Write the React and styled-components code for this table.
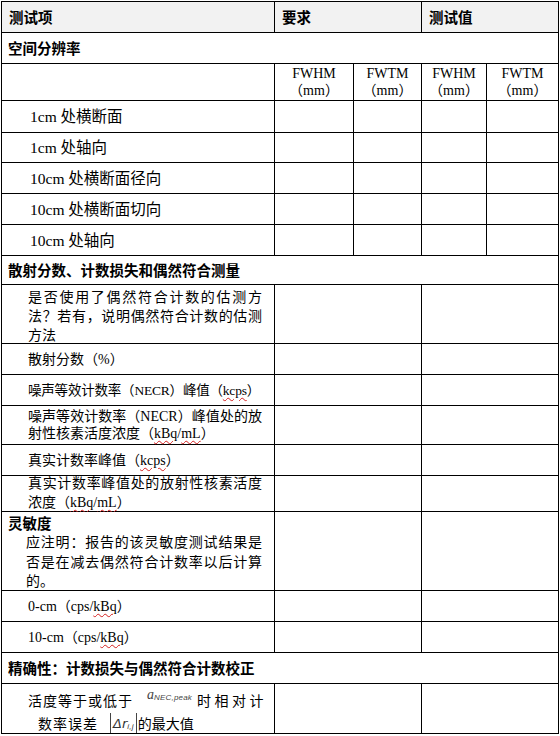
import React from 'react';
import styled, { createGlobalStyle } from 'styled-components';

const ROWS = [31, 31, 37, 32, 30, 31, 31, 31, 29, 59, 31, 31, 39, 31, 36, 79, 31, 31, 31, 50];

const Global = createGlobalStyle`
  html, body { margin: 0; padding: 0; background: #fff; }
  body {
    font-family: "Liberation Serif", "Noto Sans CJK SC", serif;
    color: #000;
  }
`;

const Sheet = styled.div`
  display: grid;
  grid-template-columns: 273px 79px 68px 65px 72px;
  grid-template-rows: ${ROWS.map((r) => `${r}px`).join(' ')};
  width: max-content;
  margin: 1px 0 0 1px;
  border-top: 1px solid #000;
  border-left: 1px solid #000;
`;

const Cell = styled.div`
  box-sizing: border-box;
  min-width: 0;
  border-right: 1px solid #000;
  border-bottom: 1px solid #000;
  grid-column: span ${(p) => p.$span || 1};
  background: #fff;
  display: flex;
  align-items: ${(p) => (p.$top ? 'flex-start' : 'center')};
  padding-top: ${(p) => p.$padTop || 0}px;
`;

const HeadCell = styled(Cell)`
  background: #f2f2f2;
  padding-left: 7px;
`;

const SectionCell = styled(Cell)`
  padding-left: 6px;
`;

const UnitCell = styled(Cell)`
  justify-content: center;
`;

const Bold = styled.div`
  font-family: "Noto Sans CJK SC", sans-serif;
  font-weight: 700;
  font-size: 14.5px;
  line-height: 20px;
  white-space: nowrap;
`;

const Label = styled.div`
  width: 100%;
  box-sizing: border-box;
  padding: 0 ${(p) => p.$right || 12}px 0 ${(p) => p.$left || 26}px;
  font-size: ${(p) => p.$size || 14}px;
  line-height: ${(p) => p.$lh || 19}px;
  text-align: justify;
  white-space: ${(p) => (p.$nowrap ? 'nowrap' : 'normal')};
  letter-spacing: ${(p) => p.$ls || 0}px;
  margin-top: ${(p) => p.$shift || 0}px;
`;

const Unit = styled.div`
  font-size: 14px;
  line-height: 17px;
  text-align: center;
`;

const Wavy = styled.span`
  text-decoration: underline wavy #d42020;
  text-decoration-thickness: 1px;
  text-underline-offset: 2px;
`;

const SensBlock = styled.div`
  width: 100%;
`;

const SensTitle = styled.div`
  font-family: "Noto Sans CJK SC", sans-serif;
  font-weight: 700;
  font-size: 14.5px;
  line-height: 20px;
  padding-left: 6px;
`;

const SensNote = styled.div`
  padding: 0 12px 0 24px;
  font-size: 14px;
  line-height: 19.5px;
  text-align: justify;
`;

const MathBlock = styled.div`
  width: 100%;
  font-size: 14px;
`;

const MathLine = styled.div`
  display: flex;
  align-items: center;
  height: ${(p) => p.$h}px;
  padding-left: ${(p) => p.$left}px;
  white-space: nowrap;
`;

const Spaced = styled.span`
  letter-spacing: ${(p) => p.$ls || 0}px;
`;

const MathA = styled.span`
  display: inline-flex;
  align-items: flex-start;
  margin-left: ${(p) => p.$ml}px;
  width: ${(p) => p.$w}px;
  color: #444;
  font-family: "Liberation Serif", serif;
  font-style: italic;
  font-size: 14px;
  line-height: 14px;
  position: relative;
  top: -5px;
`;

const Sub = styled.span`
  font-family: "Liberation Sans", sans-serif;
  font-style: italic;
  font-size: 8px;
  line-height: 8px;
  margin-top: ${(p) => p.$mt || 6}px;
  letter-spacing: 0.2px;
`;

const Abs = styled.span`
  display: inline-flex;
  align-items: center;
  margin-left: ${(p) => p.$ml}px;
  margin-right: 1px;
  height: 20px;
  padding: 0 2px;
  border-left: 1px solid #444;
  border-right: 1px solid #444;
  color: #333;
  font-family: "DejaVu Sans", sans-serif;
  font-style: italic;
  font-size: 13px;
`;

const Empty = ({ span }) => <Cell $span={span} />;

const lengthRows = [
  '1cm 处横断面',
  '1cm 处轴向',
  '10cm 处横断面径向',
  '10cm 处横断面切向',
  '10cm 处轴向',
];

export default function App() {
  return (
    <>
      <Global />
      <Sheet>
        <HeadCell><Bold>测试项</Bold></HeadCell>
        <HeadCell $span={2}><Bold>要求</Bold></HeadCell>
        <HeadCell $span={2}><Bold>测试值</Bold></HeadCell>

        <SectionCell $span={5}><Bold>空间分辨率</Bold></SectionCell>

        <Empty />
        <UnitCell><Unit>FWHM<br />（mm）</Unit></UnitCell>
        <UnitCell><Unit>FWTM<br />（mm）</Unit></UnitCell>
        <UnitCell><Unit>FWHM<br />（mm）</Unit></UnitCell>
        <UnitCell><Unit>FWTM<br />（mm）</Unit></UnitCell>

        {lengthRows.map((t) => (
          <React.Fragment key={t}>
            <Cell><Label $left={28} $size={15.5}>{t}</Label></Cell>
            <Empty /><Empty /><Empty /><Empty />
          </React.Fragment>
        ))}

        <SectionCell $span={5}><Bold>散射分数、计数损失和偶然符合测量</Bold></SectionCell>

        <Cell $top $padTop={3}>
          <Label>是否使用了偶然符合计数的估测方法？若有，说明偶然符合计数的估测方法</Label>
        </Cell>
        <Empty span={2} /><Empty span={2} />

        <Cell><Label>散射分数（%）</Label></Cell>
        <Empty span={2} /><Empty span={2} />

        <Cell>
          <Label $nowrap $size={13.5} $ls={-0.2}>噪声等效计数率（NECR）峰值（<Wavy>kcps</Wavy>）</Label>
        </Cell>
        <Empty span={2} /><Empty span={2} />

        <Cell>
          <Label $lh={17}>噪声等效计数率（NECR）峰值处的放射性核素活度浓度（<Wavy>kBq</Wavy>/<Wavy>mL</Wavy>）</Label>
        </Cell>
        <Empty span={2} /><Empty span={2} />

        <Cell><Label>真实计数率峰值（<Wavy>kcps</Wavy>）</Label></Cell>
        <Empty span={2} /><Empty span={2} />

        <Cell $top>
          <Label $shift={-2}>真实计数率峰值处的放射性核素活度浓度（<Wavy>kBq</Wavy>/<Wavy>mL</Wavy>）</Label>
        </Cell>
        <Empty span={2} /><Empty span={2} />

        <Cell $top $padTop={1}>
          <SensBlock>
            <SensTitle>灵敏度</SensTitle>
            <SensNote>应注明：报告的该灵敏度测试结果是否是在减去偶然符合计数率以后计算的。</SensNote>
          </SensBlock>
        </Cell>
        <Empty span={2} /><Empty span={2} />

        <Cell><Label>0-cm（cps/<Wavy>kBq</Wavy>）</Label></Cell>
        <Empty span={2} /><Empty span={2} />

        <Cell><Label>10-cm（cps/<Wavy>kBq</Wavy>）</Label></Cell>
        <Empty span={2} /><Empty span={2} />

        <SectionCell $span={5}><Bold>精确性：计数损失与偶然符合计数校正</Bold></SectionCell>

        <Cell $top $padTop={4}>
          <MathBlock>
            <MathLine $h={24} $left={26}>
              <Spaced $ls={1}>活度等于或低于</Spaced>
              <MathA $ml={14} $w={50}>a<Sub>NEC,peak</Sub></MathA>
              <Spaced $ls={3.5}>时相对计</Spaced>
            </MathLine>
            <MathLine $h={22} $left={36}>
              <Spaced $ls={1}>数率误差</Spaced>
              <Abs $ml={12}>Δr<Sub $mt={7}>i,j</Sub></Abs>
              <span>的最大值</span>
            </MathLine>
          </MathBlock>
        </Cell>
        <Empty span={2} /><Empty span={2} />
      </Sheet>
    </>
  );
}
